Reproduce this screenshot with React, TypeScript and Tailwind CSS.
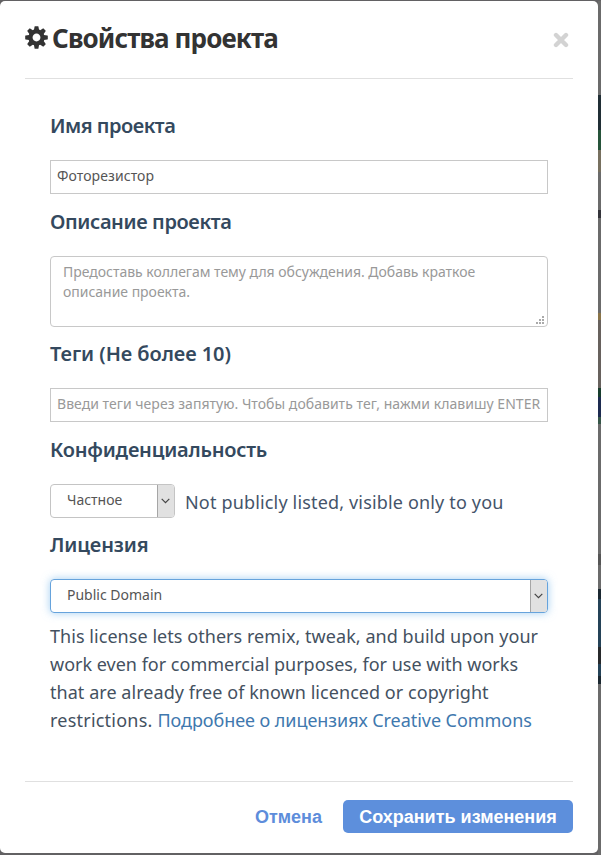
import React from "react";

function Gear({ className = "" }: { className?: string }) {
  return (
    <svg className={className} viewBox="-12 -12 24 24" fill="#333">
      <circle r="6.3" fill="none" stroke="#333" strokeWidth="4.4" />
      {[0, 45, 90, 135, 180, 225, 270, 315].map((angle) => (
        <path key={angle} transform={`rotate(${angle})`} d="M-2.7 -7.6 -2 -11.4Q-1.9 -11.8 -1.5 -11.8H1.5Q1.9 -11.8 2 -11.4L2.7 -7.6Z" />
      ))}
    </svg>
  );
}

function Label({ children, className = "" }: { children: React.ReactNode; className?: string }) {
  return (
    <label className={`block h-7 whitespace-nowrap text-[20px] font-semibold leading-7 text-[#34495e] ${className}`}>
      {children}
    </label>
  );
}

function SelectArrow() {
  return (
    <span className="flex h-full w-[17px] items-center justify-center border-l border-[#a6a6a6] bg-[#e1e1e1] pr-[2px]">
      <svg width="9" height="6" viewBox="0 0 9 6" fill="none" stroke="#444" strokeWidth="1.2">
        <path d="M0.7 0.8 4.5 4.6 8.3 0.8" />
      </svg>
    </span>
  );
}

/* Slices of the dimmed workspace visible beside the dialog */
function Backdrop() {
  return (
    <div className="flex h-[855px] w-[3px] shrink-0 flex-col bg-[#6b6b6b] pt-[94px]">
      <div className="h-[35px] bg-[#202e35]" />
      <div className="h-[20px] bg-[#26543a]" />
      <div className="h-[22px] bg-[#77705f]" />
      <div className="mt-[38px] h-[8px] bg-[#34343a]" />
      <div className="mt-[95px] h-[7px] bg-[#8a7448]" />
      <div className="h-[68px] bg-[#67615d]" />
      <div className="h-[9px] bg-[#173d2d]" />
      <div className="h-[20px] bg-[#1d2b50]" />
      <div className="h-[7px] bg-[#365648]" />
      <div className="mt-[130px] h-[11px] bg-[#565656]" />
      <div className="mt-[24px] h-[10px] bg-[#1b2831]" />
      <div className="h-[48px] bg-[#244257]" />
      <div className="h-[17px] bg-[#27292b]" />
      <div className="h-[12px] bg-[#244257]" />
      <div className="h-[8px] bg-[#1b2831]" />
    </div>
  );
}

export default function App() {
  return (
    <div className="flex h-[855px] w-[601px] overflow-hidden bg-[#626163] pt-px font-['Noto_Sans',sans-serif]">
      <div className="flex h-[852px] w-[598px] shrink-0 flex-col rounded-[5px] bg-white px-[25px]">
        <header className="flex h-[78px] shrink-0 items-start border-b border-[#e0e0e0]">
          <Gear className="mt-[25px] size-[23px]" />
          <h1 className="ml-1 mt-[18px] whitespace-nowrap text-[26px] font-bold leading-[38px] tracking-[-0.88px] text-[#333]">
            Свойства проекта
          </h1>
          <button aria-label="Close" className="ml-auto mr-[4px] mt-[31px]">
            <svg width="16" height="16" viewBox="0 0 16 16" stroke="#d3d3d3" strokeWidth="4.4" strokeLinecap="round">
              <path d="M3 3 13 13M13 3 3 13" />
            </svg>
          </button>
        </header>

        <main className="flex h-[702px] shrink-0 flex-col px-[25px] pt-[33px]">
          <Label className="tracking-[-0.5px]">Имя проекта</Label>
          <div className="mt-5 h-[34px] w-[498px] border border-[#c8c8c8] px-1.5 text-[14px] leading-[30px] tracking-[0.08px] text-[#555]">
            <span>Фоторезистор</span>
          </div>

          <Label className="mt-[14px] tracking-[-0.38px]">Описание проекта</Label>
          <div className="mt-5 flex h-[71px] w-[498px] justify-between rounded-[4px] border border-[#c8c8c8] pl-3 pt-[5px] text-[14px] leading-5 text-[#999]">
            <p className="whitespace-nowrap tracking-[-0.02px]">
              <span>Предоставь коллегам тему для обсуждения. Добавь краткое</span>
              <br />
              <span>описание проекта.</span>
            </p>
            <svg className="mb-[2px] mr-[3px] self-end" width="8" height="8" viewBox="0 0 8 8" fill="#aaa">
              <path d="M6 0h2v2H6zM3 3h2v2H3zM6 3h2v2H6zM0 6h2v2H0zM3 6h2v2H3zM6 6h2v2H6z" />
            </svg>
          </div>

          <Label className="mt-[13px] tracking-[-0.06px]">Теги (Не более 10)</Label>
          <div className="mt-5 h-[34px] w-[498px] whitespace-nowrap border border-[#c8c8c8] px-1.5 text-[14px] leading-[30px] tracking-[0.035px] text-[#999]">
            <span>Введи теги через запятую. Чтобы добавить тег, нажми клавишу ENTER</span>
          </div>

          <Label className="mt-[14px] tracking-[-0.22px]">Конфиденциальность</Label>
          <div className="mt-5 flex h-[34px] items-center">
            <div className="flex h-[34px] w-[125px] items-center justify-between overflow-hidden rounded-[4px] border border-[#c4c4c4] pl-4 text-[14px] text-[#555]">
              <span className="pb-[3px]">Частное</span>
              <SelectArrow />
            </div>
            <span className="ml-[10px] whitespace-nowrap pt-[2px] text-[18px] leading-7 tracking-[0.165px] text-[#44546a]">
              Not publicly listed, visible only to you
            </span>
          </div>

          <Label className="mt-[13px] tracking-[-0.12px]">Лицензия</Label>
          <div className="mt-5 flex h-[34px] w-[498px] shrink-0 items-center justify-between overflow-hidden rounded-[4px] border border-[#66a3dc] pl-4 text-[14px] text-[#555] shadow-[0_0_8px_rgba(102,175,233,0.6)]">
            <span className="pb-[3px]">Public Domain</span>
            <SelectArrow />
          </div>
          <p className="mt-[9px] whitespace-nowrap text-[18px] leading-7 text-[#44515f]">
            <span className="tracking-[0.05px]">This license lets others remix, tweak, and build upon your</span>
            <br />
            <span>work even for commercial purposes, for use with works</span>
            <br />
            <span className="tracking-[0.05px]">that are already free of known licenced or copyright</span>
            <br />
            <span className="tracking-[0.22px]">restrictions. </span>
            <a className="tracking-[-0.05px] text-[#4078ae]">Подробнее о лицензиях Creative Commons</a>
          </p>
        </main>

        <footer className="flex items-start justify-end border-t border-[#e0e0e0] pt-[18px] font-['Liberation_Sans',Arial,sans-serif] text-[18px] font-bold">
          <button className="mr-[21px] h-[33px] pt-px text-[#5d8ddb]">Отмена</button>
          <button className="h-[33px] w-[230px] whitespace-nowrap rounded-[5px] bg-[#5d8fdc] pt-px text-white">
            Сохранить изменения
          </button>
        </footer>
      </div>
      <Backdrop />
    </div>
  );
}
